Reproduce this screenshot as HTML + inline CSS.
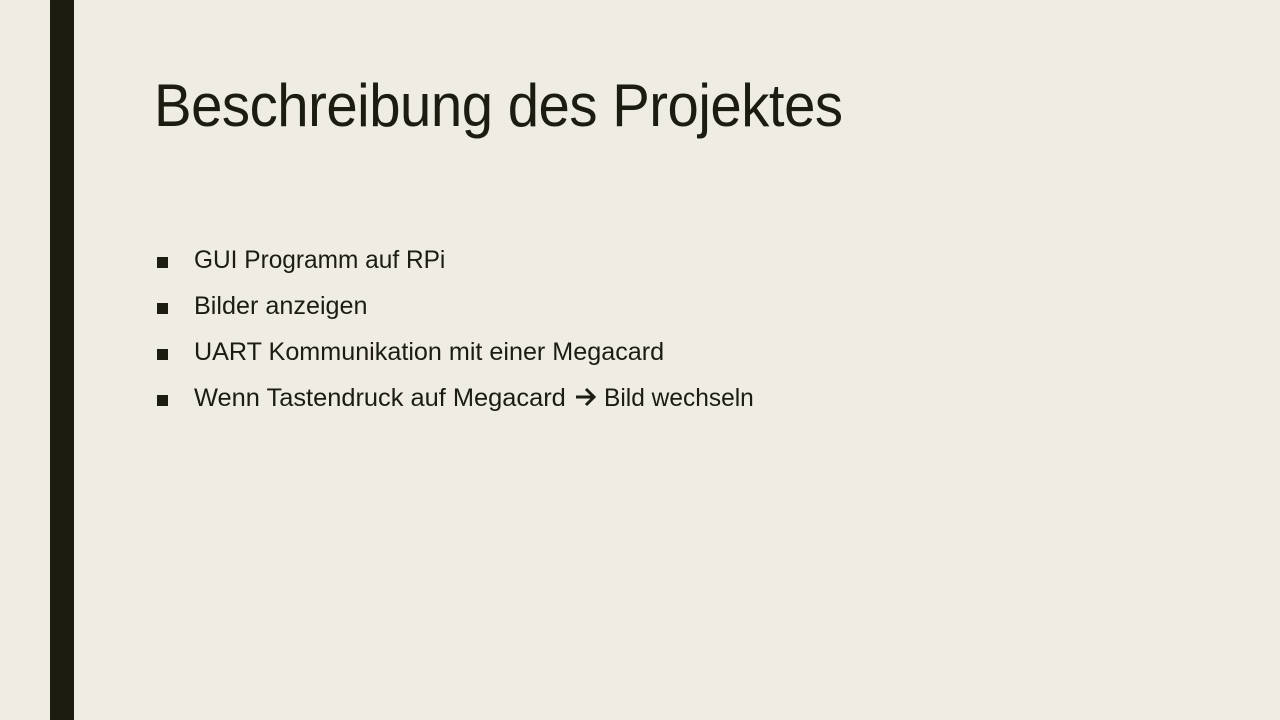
<!DOCTYPE html>
<html><head><meta charset="utf-8"><style>
html,body{margin:0;padding:0}
body{width:1280px;height:720px;background:#efece4;position:relative;overflow:hidden;font-family:"Liberation Sans",sans-serif;color:#1c1c10}
.bar{position:absolute;left:50px;top:0;width:24px;height:720px;background:#1c1c10}
.t{position:absolute;left:154px;top:70px;font-size:60px;line-height:72px;white-space:nowrap;transform:scaleX(0.938);transform-origin:left top;letter-spacing:-0.5px}
.b{position:absolute;left:194px;font-size:25px;line-height:30px;white-space:nowrap;transform:scaleX(0.978);transform-origin:left top}
.sq{position:absolute;left:157px;width:11px;height:11px;background:#1c1c10}
</style></head><body>
<div class="bar"></div>
<div class="t">Beschreibung des Projektes</div>
<div class="sq" style="top:257px"></div><div class="b" style="top:245px">GUI Programm auf RPi</div>
<div class="sq" style="top:303px"></div><div class="b" style="top:291px;transform:scaleX(1.007)">Bilder anzeigen</div>
<div class="sq" style="top:349px"></div><div class="b" style="top:337px;transform:scaleX(1.006)">UART Kommunikation mit einer Megacard</div>
<div class="sq" style="top:395px"></div><div class="b" style="top:383px;transform:scaleX(1.016)">Wenn Tastendruck auf Megacard</div>
<svg style="position:absolute;left:574px;top:386px" width="24" height="22" viewBox="0 0 24 22"><path d="M2 11H20M12 3L20 11L12 19" fill="none" stroke="#1c1c10" stroke-width="3"/></svg>
<div class="b" style="top:383px;left:604px;transform:scaleX(0.98)">Bild wechseln</div>
</body></html>
